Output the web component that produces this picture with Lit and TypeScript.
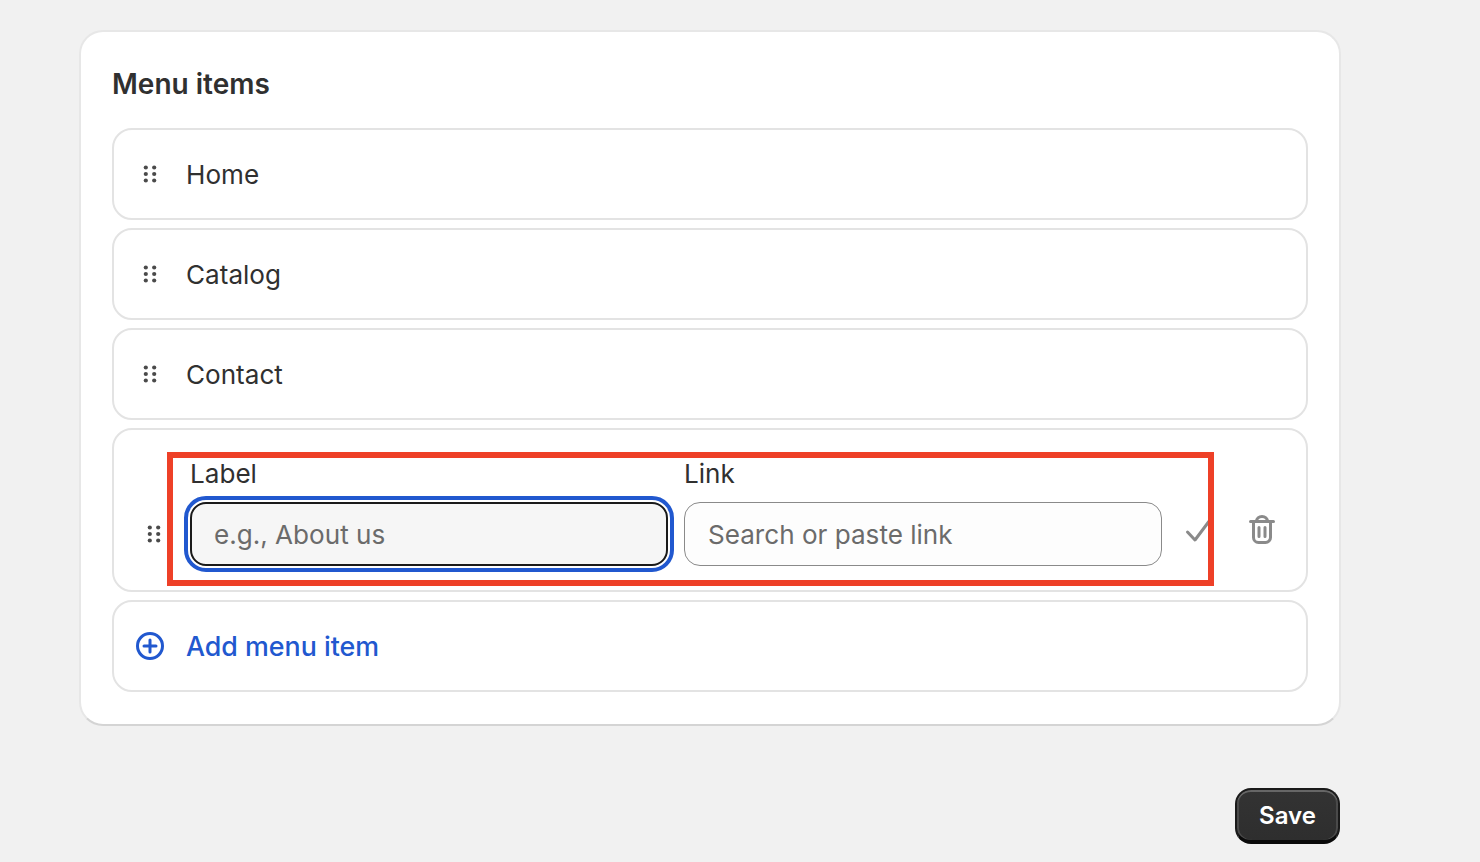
import { LitElement, css, html } from "lit";
import { customElement } from "lit/decorators.js";

const dragIcon = html`<svg class="drag" viewBox="0 0 20 20" fill="currentColor">
  <circle cx="5.800" cy="3.500" r="2.100"></circle><circle cx="14.200" cy="3.500" r="2.100"></circle>
  <circle cx="5.800" cy="10" r="2.100"></circle><circle cx="14.200" cy="10" r="2.100"></circle>
  <circle cx="5.800" cy="16.500" r="2.100"></circle><circle cx="14.200" cy="16.500" r="2.100"></circle>
</svg>`;

@customElement("app-root")
class AppRoot extends LitElement {
  static styles = css`
    :host {
      display: block;
      box-sizing: border-box;
      height: 862px;
      padding: 30px 139px 0 79px;
      background: #f1f1f1;
      font-family: Inter, "Liberation Sans", sans-serif;
      color: #303030;
      overflow: hidden;
    }
    .card {
      box-sizing: border-box;
      height: 696px;
      padding: 32px 31px 0;
      background: #fff;
      border: 2px solid #e7e7e7;
      border-bottom-color: #d4d4d4;
      border-radius: 24px;
    }
    h2 {
      margin: 0 0 24px;
      font-size: 28px;
      line-height: 40px;
      font-weight: 600;
    }
    .list {
      display: flex;
      flex-direction: column;
      gap: 8px;
    }
    .row {
      box-sizing: border-box;
      display: flex;
      align-items: center;
      height: 92px;
      padding: 0 26px;
      background: #fff;
      border: 2px solid #e3e3e3;
      border-radius: 20px;
      font-size: 26.100px;
    }
    .drag {
      flex: none;
      width: 20px;
      height: 20px;
      margin-right: 26px;
      color: #4a4a4a;
    }
    .edit {
      position: relative;
      height: 164px;
      padding: 0 0 24px 30px;
      align-items: flex-end;
    }
    .edit .drag {
      margin-bottom: 22px;
    }
    .fields {
      display: grid;
      grid-template-columns: 478px 478px;
      column-gap: 16px;
    }
    label {
      display: block;
      line-height: 32px;
      margin-bottom: 12px;
    }
    .input {
      box-sizing: border-box;
      height: 64px;
      padding: 0 23px;
      display: flex;
      align-items: center;
      border: 1px solid #8a8a8a;
      border-radius: 16px;
      background: #fdfdfd;
      color: #6b6b6b;
    }
    .input.focused {
      border: 2px solid #1a1a1a;
      background: #f6f6f6;
      padding: 0 22px;
      outline: 4px solid #2158cf;
      outline-offset: 2px;
    }
    .check {
      flex: none;
      width: 30px;
      height: 30px;
      margin: 0 0 20px 21px;
    }
    .trash {
      flex: none;
      width: 30px;
      height: 30px;
      margin: 0 0 21px 34px;
    }
    .highlight {
      position: absolute;
      left: 53px;
      top: 22px;
      width: 1047px;
      height: 134px;
      box-sizing: border-box;
      border: 6px solid #ee4027;
      pointer-events: none;
    }
    .add {
      padding-left: 21px;
      color: #2158cf;
      font-weight: 500;
      font-size: 26.800px;
    }
    .add svg {
      flex: none;
      width: 30px;
      height: 30px;
      margin-right: 21px;
    }
    .actions {
      display: flex;
      justify-content: flex-end;
      margin-top: 62px;
    }
    .save {
      box-sizing: border-box;
      width: 105px;
      height: 56px;
      margin-right: 1px;
      padding: 0;
      border: 2px solid #1a1a1a;
      border-bottom: 4px solid #0a0a0a;
      border-radius: 16px;
      background: linear-gradient(#333, #2e2e2e);
      box-shadow: inset 0 2px 0 #666, inset 2px 0 0 #4a4a4a, inset -2px 0 0 #4a4a4a;
      color: #fff;
      font: 600 24px Inter, "Liberation Sans", sans-serif;
    }
  `;

  render() {
    return html`
      <section class="card">
        <h2>Menu items</h2>
        <div class="list">
          ${["Home", "Catalog", "Contact"].map(
            (name) => html`<div class="row">${dragIcon}<span>${name}</span></div>`
          )}
          <div class="row edit">
            ${dragIcon}
            <div class="fields">
              <div>
                <label>Label</label>
                <div class="input focused">e.g., About us</div>
              </div>
              <div>
                <label>Link</label>
                <div class="input">Search or paste link</div>
              </div>
            </div>
            <svg class="check" viewBox="0 0 30 30" fill="none" stroke="#8a8a8a" stroke-width="3" stroke-linecap="round" stroke-linejoin="round">
              <path d="M4.500 16l7.500 8L27 4"></path>
            </svg>
            <svg class="trash" viewBox="0 0 30 30" fill="none" stroke="#8a8a8a" stroke-width="3" stroke-linecap="round" stroke-linejoin="round">
              <path d="M3.500 6.500h23"></path>
              <path d="M9.500 6.500a5.500 5 0 0 1 11 0"></path>
              <path d="M6.500 6.500v16a5 5 0 0 0 5 5h7a5 5 0 0 0 5-5v-16"></path>
              <path d="M12 12.500v9M18 12.500v9"></path>
            </svg>
            <div class="highlight"></div>
          </div>
          <div class="row add">
            <svg viewBox="0 0 30 30" fill="none" stroke="currentColor" stroke-width="3" stroke-linecap="round">
              <circle cx="15" cy="15" r="12.500"></circle>
              <path d="M15 9v12M9 15h12"></path>
            </svg>
            <span>Add menu item</span>
          </div>
        </div>
      </section>
      <div class="actions"><button class="save">Save</button></div>
    `;
  }
}

declare global {
  interface HTMLElementTagNameMap {
    "app-root": AppRoot;
  }
}
